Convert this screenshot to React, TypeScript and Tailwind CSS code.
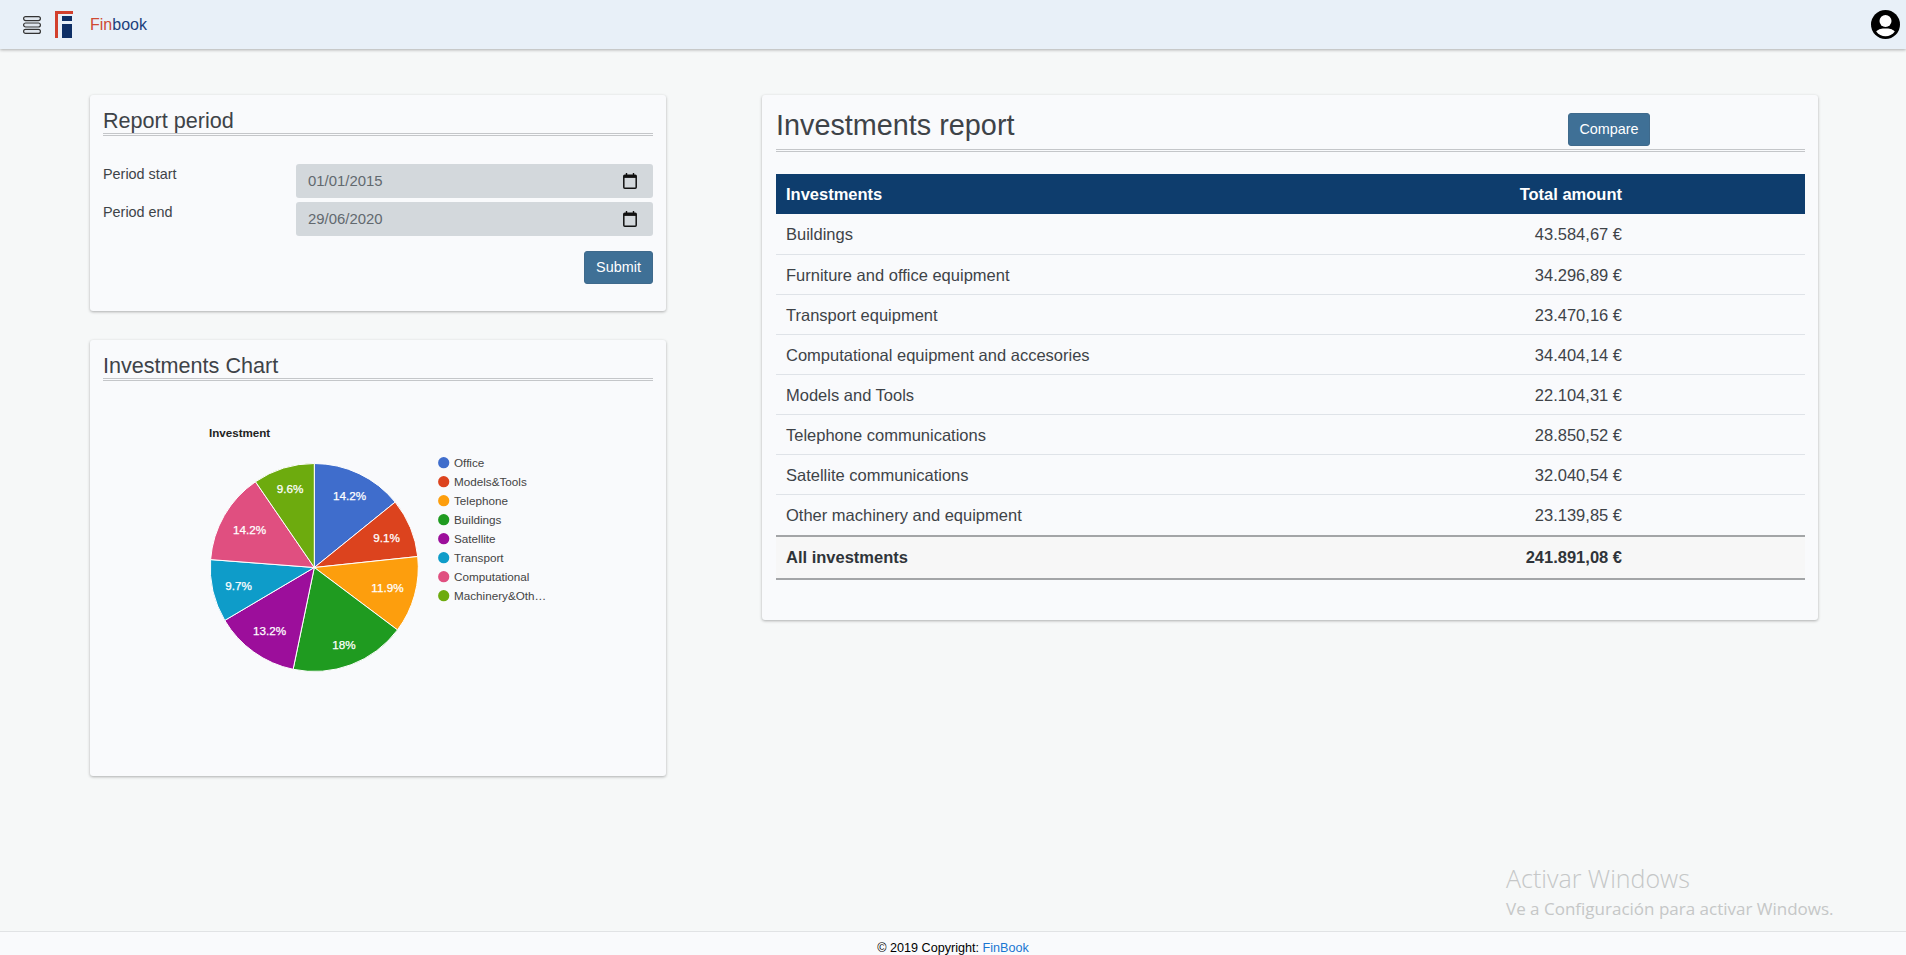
import React from 'react';

const rows = [
  { name: 'Buildings', amount: '43.584,67 €' },
  { name: 'Furniture and office equipment', amount: '34.296,89 €' },
  { name: 'Transport equipment', amount: '23.470,16 €' },
  { name: 'Computational equipment and accesories', amount: '34.404,14 €' },
  { name: 'Models and Tools', amount: '22.104,31 €' },
  { name: 'Telephone communications', amount: '28.850,52 €' },
  { name: 'Satellite communications', amount: '32.040,54 €' },
  { name: 'Other machinery and equipment', amount: '23.139,85 €' },
];

// slices run clockwise from twelve o'clock, label positions are read off the picture
const slices = [
  { name: 'Office', value: 34296.89, color: '#3f6dcc', label: '14.2%', x: 349.5, y: 495.5 },
  { name: 'Models&Tools', value: 22104.31, color: '#dc431e', label: '9.1%', x: 386.5, y: 537.5 },
  { name: 'Telephone', value: 28850.52, color: '#fd9e0d', label: '11.9%', x: 387.5, y: 587.5 },
  { name: 'Buildings', value: 43584.67, color: '#1f9b20', label: '18%', x: 344, y: 645 },
  { name: 'Satellite', value: 32040.54, color: '#9c0e9b', label: '13.2%', x: 269.5, y: 630.5 },
  { name: 'Transport', value: 23470.16, color: '#0e9cc9', label: '9.7%', x: 238.5, y: 585.5 },
  { name: 'Computational', value: 34404.14, color: '#e04f80', label: '14.2%', x: 249.5, y: 529.5 },
  { name: 'Machinery&Oth…', value: 23139.85, color: '#6dab0e', label: '9.6%', x: 290, y: 488.5 },
];

const PieChart = () => {
  const cx = 314.3;
  const cy = 567.5;
  const r = 104;
  const total = slices.reduce((sum, s) => sum + s.value, 0);
  let angle = 0;

  return (
    <svg viewBox="103 400 550 340" className="block w-[550px] h-[340px]" fontFamily="'Liberation Sans', Arial, sans-serif">
      <text x="209" y="437" fontSize="11.6" fontWeight="700" fill="#222222">Investment</text>
      {slices.map((s) => {
        const start = angle;
        angle += (s.value / total) * Math.PI * 2;
        const x1 = cx + r * Math.sin(start);
        const y1 = cy - r * Math.cos(start);
        const x2 = cx + r * Math.sin(angle);
        const y2 = cy - r * Math.cos(angle);
        const large = angle - start > Math.PI ? 1 : 0;
        return (
          <path
            key={s.name}
            d={`M${cx} ${cy}L${x1} ${y1}A${r} ${r} 0 ${large} 1 ${x2} ${y2}Z`}
            fill={s.color}
            stroke="#ffffff"
            strokeWidth="1"
          />
        );
      })}
      {slices.map((s, i) => (
        <text key={i} x={s.x} y={s.y + 4} textAnchor="middle" fontSize="11.7" fill="#ffffff" stroke="#ffffff" strokeWidth="0.25">{s.label}</text>
      ))}
      {slices.map((s, i) => (
        <g key={i}>
          <circle cx="443.7" cy={462.7 + i * 19} r="5.6" fill={s.color} />
          <text x="454" y={466.7 + i * 19} fontSize="11.7" fill="#444444">{s.name}</text>
        </g>
      ))}
    </svg>
  );
};

const CalendarIcon = () => (
  <svg viewBox="0 0 14 16" className="w-[14px] h-[16px]">
    <path d="M3.500 0v2M10.500 0v2" stroke="#111111" strokeWidth="1.4" />
    <rect x="0.8" y="2.300" width="12.400" height="12.900" rx="1" fill="none" stroke="#111111" strokeWidth="1.5" />
    <rect x="0.8" y="2.300" width="12.400" height="2.600" fill="#111111" />
  </svg>
);

const DateField = ({ value }: { value: string }) => (
  <div className="h-[34px] rounded-[3px] bg-[#d3d8dc] flex items-center justify-between pl-[12px] pr-[16px] text-[14.9px] text-[#62696f]">
    <span>{value}</span>
    <CalendarIcon />
  </div>
);

const Card = ({ className, children }: { className: string; children: React.ReactNode }) => (
  <div className={`bg-[#f9fafc] rounded-[3px] shadow-[0_1px_3px_rgba(0,0,0,0.3)] ${className}`}>{children}</div>
);

export default function App() {
  return (
    <div className="relative h-screen overflow-hidden flex flex-col bg-[#f6f8f8] text-[#3e4348] font-['Liberation_Sans',Arial,sans-serif]">
      <header className="h-[49px] shrink-0 bg-[#e8f0f8] shadow-[0_1px_3px_rgba(0,0,0,0.3)] flex items-center pl-[23px] pr-[6px]">
        <svg viewBox="0 0 18 18" className="w-[18px] h-[18px]">
          <rect x="0.6" y="0.6" width="16.800" height="4" rx="2" fill="#dfe6ee" stroke="#333333" strokeWidth="1.200" />
          <rect x="0.6" y="7" width="16.800" height="4" rx="2" fill="#dfe6ee" stroke="#333333" strokeWidth="1.200" />
          <rect x="0.6" y="13.400" width="16.800" height="4" rx="2" fill="#dfe6ee" stroke="#333333" strokeWidth="1.200" />
        </svg>
        <svg viewBox="0 0 18 27" className="ml-[14px] w-[18px] h-[27px]">
          <path d="M0 0H18V3H3V27H0Z" fill="#d2402d" />
          <rect x="7" y="5" width="10" height="5" fill="#0e2f66" />
          <rect x="7" y="13" width="10" height="14" fill="#0e2f66" />
        </svg>
        <span className="ml-[17px] text-base">
          <span className="text-[#cf4a33]">Fin</span>
          <span className="text-[#1c3f7c]">book</span>
        </span>
        <svg viewBox="0 0 29 29" className="ml-auto w-[29px] h-[29px]">
          <circle cx="14.500" cy="14.500" r="14.500" fill="#000000" />
          <circle cx="14.500" cy="11" r="6" fill="#ffffff" />
          <path d="M5.200 21.500C8 18.800 10.500 18.500 14.500 18.500S21 18.800 23.800 21.500A11.500 11.500 0 0 1 5.200 21.500Z" fill="#ffffff" />
        </svg>
      </header>

      <main className="flex-1 min-h-0 flex items-start gap-[96px] pl-[90px] pt-[46px]">
        <div className="w-[576px] flex flex-col gap-[29px]">
          <Card className="h-[216px] px-[13px] pt-[13px]">
            <h2 className="text-[21.6px] leading-[25px] border-b-[3px] border-double border-[#c4c6c9]">Report period</h2>
            <div className="mt-[28px] grid grid-cols-[193px_1fr] gap-y-[4px] text-[14.4px]">
              <label>Period start</label>
              <DateField value="01/01/2015" />
              <label>Period end</label>
              <DateField value="29/06/2020" />
            </div>
            <div className="mt-[15px] flex justify-end">
              <button className="w-[69px] h-[33px] rounded-[3px] bg-[#3f7096] border border-[#3f6a8c] text-white text-[14.4px]">Submit</button>
            </div>
          </Card>
          <Card className="h-[436px] px-[13px] pt-[13px]">
            <h2 className="text-[21.6px] leading-[25px] border-b-[3px] border-double border-[#c4c6c9]">Investments Chart</h2>
            <div className="mt-[19px]">
              <PieChart />
            </div>
          </Card>
        </div>

        <Card className="w-[1056px] h-[525px] pl-[14px] pr-[13px] pt-[12px]">
          <div className="h-[45px] flex items-start justify-between border-b-[3px] border-double border-[#c4c6c9]">
            <h1 className="text-[28.8px] leading-[36px]">Investments report</h1>
            <button className="mt-[6px] mr-[155px] w-[82px] h-[33px] rounded-[3px] bg-[#3f7096] border border-[#3f6a8c] text-white text-[14.4px]">Compare</button>
          </div>
          <table className="mt-[22px] w-full border-collapse text-[16.5px]">
            <thead>
              <tr className="h-[40px] bg-[#0e3d6d] text-white">
                <th className="pl-[10px] text-left font-bold">Investments</th>
                <th className="pr-[183px] text-right font-bold">Total amount</th>
              </tr>
            </thead>
            <tbody>
              {rows.map((row, i) => (
                <tr key={row.name} className={i === rows.length - 1 ? 'h-[42px]' : 'h-[40px] border-b border-[#dfe3e8]'}>
                  <td className="pl-[10px] pt-[2px]">{row.name}</td>
                  <td className="pr-[183px] pt-[2px] text-right">{row.amount}</td>
                </tr>
              ))}
              <tr className="h-[43px] bg-[#f7f7f7] border-t-2 border-b-2 border-[#a3a5a7] font-bold text-[#2f3439]">
                <td className="pl-[10px]">All investments</td>
                <td className="pr-[183px] text-right">241.891,08 €</td>
              </tr>
            </tbody>
          </table>
        </Card>
      </main>

      <footer className="h-[24px] shrink-0 bg-[#f9fafc] border-t border-[#e1e3e5] pt-[9px] text-center text-[12.6px] leading-[15px] text-black">
        © 2019 Copyright: <span className="text-[#1976d2]">FinBook</span>
      </footer>

      <div className="absolute left-[1506px] top-[863px] text-[#c5c7c7] font-['Open_Sans',sans-serif]">
        <div className="text-[25px] leading-[30px] font-light">Activar Windows</div>
        <div className="text-[17px] leading-[22px] mt-[5px]">Ve a Configuración para activar Windows.</div>
      </div>
    </div>
  );
}
